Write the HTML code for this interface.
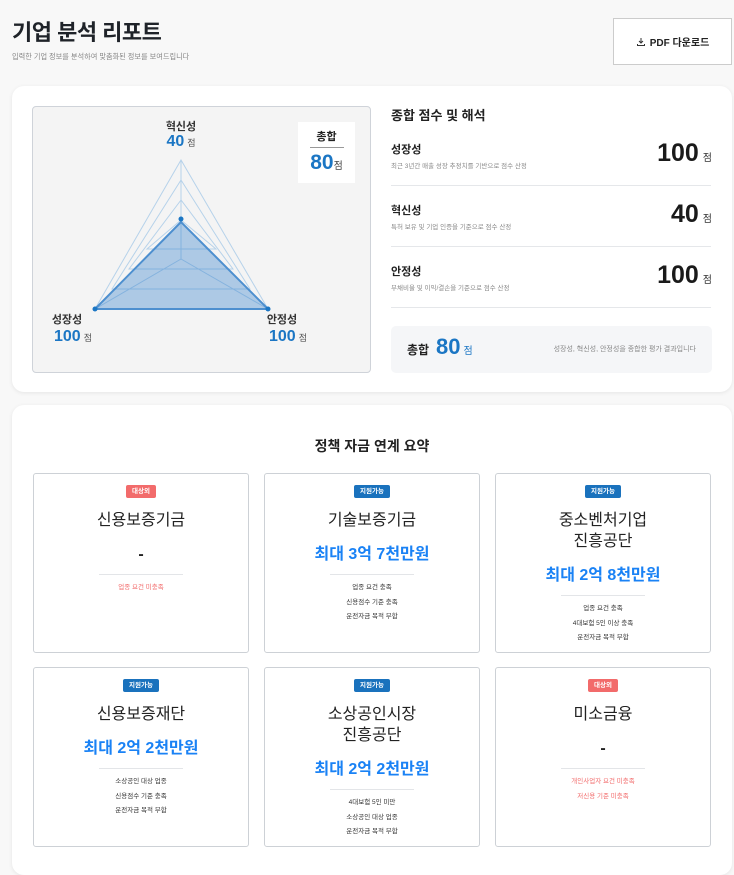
<!DOCTYPE html>
<html><head><meta charset="utf-8"><style>
*{margin:0;padding:0;box-sizing:border-box}
body{width:734px;height:856px;overflow:hidden;background:#f8f8f8;font-family:"Liberation Sans","Noto Sans CJK KR",sans-serif;color:#222;position:relative}
.abs{position:absolute}
h1{position:absolute;left:12px;top:15px;font-size:22px;font-weight:700;color:#1f2329;letter-spacing:-0.5px}
.sub{left:12px;top:52px;font-size:7.2px;color:#888}
.pdf{left:613px;top:18px;width:119px;height:47px;background:#fff;border:1px solid #ccc;font-size:10px;font-weight:700;display:flex;align-items:center;justify-content:center;gap:4px;color:#222}
.card{background:#fff;border-radius:12px;box-shadow:0 1px 4px rgba(0,0,0,.08)}
.radar{left:32px;top:106px;width:339px;height:267px;background:#f4f4f4;border:1px solid #cfd3d9;border-radius:4px}
.lbl{font-size:11px;font-weight:700;color:#333;text-align:center;width:80px}
.num{font-size:16px;font-weight:700;color:#1b76c4;text-align:center;width:80px;white-space:nowrap}
.num small{font-size:9px;color:#555;font-weight:400;margin-left:3px}
.tot{left:298px;top:122px;width:57px;height:61px;background:#fff;text-align:center}
.rt{left:391px;font-size:13px;font-weight:700;color:#222}
.rn{font-size:11px;font-weight:700;color:#222;left:391px}
.rd{font-size:6.5px;color:#888;left:391px}
.rs{right:22px;font-size:25px;font-weight:700;color:#1a1a1a;white-space:nowrap}
.rs small{font-size:10px;font-weight:400;color:#333;margin-left:4px}
.hr{left:391px;width:320px;height:1px;background:#e5e7ea}
.sum{left:391px;top:326px;width:321px;height:47px;background:#f5f6f8;border-radius:5px}
.pc{position:absolute;width:216px;height:180px;background:#fff;border:1px solid #cdd1d6;border-radius:3px;display:flex;flex-direction:column;align-items:center;padding-top:11px}
.bd{height:13px;padding:0 6px;border-radius:2px;font-size:6.5px;font-weight:700;color:#fff;line-height:13px}
.red{background:#f26b6b}.blue{background:#1a72bd}
.pt{margin-top:12px;font-size:16px;line-height:21px;text-align:center;color:#222}
.am{margin-top:14px;font-size:16px;font-weight:700;line-height:20px;color:#1a82f5}
.dash{margin-top:14px;font-size:16px;font-weight:700;line-height:20px;color:#222}
.dv{margin-top:9px;width:84px;height:1px;background:#e3e5e8}
.it{margin-top:6px;font-size:6.5px;line-height:14.5px;text-align:center;color:#333}
.it.r{color:#f26b6b}
</style></head><body>
<h1>기업 분석 리포트</h1>
<div class="abs sub">입력한 기업 정보를 분석하여 맞춤화된 정보를 보여드립니다</div>
<div class="abs pdf"><svg width="10" height="10" viewBox="0 0 10 10"><path d="M5 1v5M3 4l2 2 2-2M1.5 7v1.5h7V7" stroke="#333" stroke-width="1" fill="none"/></svg>PDF 다운로드</div>

<div class="abs card" style="left:12px;top:86px;width:720px;height:306px"></div>
<div class="abs radar"></div>
<svg class="abs" style="left:0;top:0" width="734" height="400">
<g fill="none" stroke="#9cc4e6" stroke-width="1" opacity=".7">
<polygon points="181,160 95,309 268,309"/>
<polygon points="181,180 112,289 250,289"/>
<polygon points="181,200 129,269 233,269"/>
<polygon points="181,220 147,249 216,249" />
<line x1="181" y1="259" x2="181" y2="160"/><line x1="181" y1="259" x2="95" y2="309"/><line x1="181" y1="259" x2="268" y2="309"/>
</g>
<polygon points="181,222 95,309 268,309" fill="rgba(40,120,200,0.35)" stroke="#4d8fcf" stroke-width="2"/>
<g fill="#1b76c4"><circle cx="181" cy="219" r="2.5"/><circle cx="95" cy="309" r="2.5"/><circle cx="268" cy="309" r="2.5"/></g>
</svg>
<div class="abs lbl" style="left:141px;top:118px">혁신성</div>
<div class="abs num" style="left:141px;top:133px">40<small>점</small></div>
<div class="abs lbl" style="left:27px;top:311px">성장성</div>
<div class="abs num" style="left:33px;top:328px">100<small>점</small></div>
<div class="abs lbl" style="left:242px;top:311px">안정성</div>
<div class="abs num" style="left:248px;top:328px">100<small>점</small></div>
<div class="abs tot"><div style="font-size:11px;font-weight:700;margin-top:6px">총합</div><div style="width:34px;height:1px;background:#999;margin:3px auto 0"></div><div style="font-size:21px;font-weight:700;color:#1b76c4;margin-top:3px">80<span style="font-size:10px;color:#444;font-weight:400">점</span></div></div>

<div class="abs rt" style="top:105px">종합 점수 및 해석</div>
<div class="abs rn" style="top:141px">성장성</div><div class="abs rd" style="top:160px">최근 3년간 매출 성장 추정치를 기반으로 점수 산정</div>
<div class="abs rs" style="top:139px">100<small>점</small></div>
<div class="abs hr" style="top:185px"></div>
<div class="abs rn" style="top:202px">혁신성</div><div class="abs rd" style="top:221px">특허 보유 및 기업 인증을 기준으로 점수 산정</div>
<div class="abs rs" style="top:200px">40<small>점</small></div>
<div class="abs hr" style="top:246px"></div>
<div class="abs rn" style="top:263px">안정성</div><div class="abs rd" style="top:282px">부채비율 및 이익/결손을 기준으로 점수 산정</div>
<div class="abs rs" style="top:261px">100<small>점</small></div>
<div class="abs hr" style="top:307px"></div>
<div class="abs sum"><span class="abs" style="left:16px;top:15px;font-size:12px;font-weight:700">총합</span><span class="abs" style="left:45px;top:8px;font-size:22px;font-weight:700;color:#1b76c4">80<span style="font-size:10px;font-weight:400;margin-left:3px">점</span></span><span class="abs" style="right:16px;top:18px;font-size:7px;color:#888">성장성, 혁신성, 안정성을 종합한 평가 결과입니다</span></div>

<div class="abs card" style="left:12px;top:405px;width:720px;height:470px"></div>
<div class="abs" style="left:12px;width:720px;top:436px;text-align:center;font-size:14px;font-weight:700">정책 자금 연계 요약</div>

<div class="pc" style="left:33px;top:473px"><div class="bd red">대상외</div><div class="pt">신용보증기금</div><div class="dash">-</div><div class="dv"></div><div class="it r">업종 요건 미충족</div></div>
<div class="pc" style="left:264px;top:473px"><div class="bd blue">지원가능</div><div class="pt">기술보증기금</div><div class="am">최대 3억 7천만원</div><div class="dv"></div><div class="it">업종 요건 충족<br>신용점수 기준 충족<br>운전자금 목적 부합</div></div>
<div class="pc" style="left:495px;top:473px"><div class="bd blue">지원가능</div><div class="pt">중소벤처기업<br>진흥공단</div><div class="am">최대 2억 8천만원</div><div class="dv"></div><div class="it">업종 요건 충족<br>4대보험 5인 이상 충족<br>운전자금 목적 부합</div></div>
<div class="pc" style="left:33px;top:667px"><div class="bd blue">지원가능</div><div class="pt">신용보증재단</div><div class="am">최대 2억 2천만원</div><div class="dv"></div><div class="it">소상공인 대상 업종<br>신용점수 기준 충족<br>운전자금 목적 부합</div></div>
<div class="pc" style="left:264px;top:667px"><div class="bd blue">지원가능</div><div class="pt">소상공인시장<br>진흥공단</div><div class="am">최대 2억 2천만원</div><div class="dv"></div><div class="it">4대보험 5인 미만<br>소상공인 대상 업종<br>운전자금 목적 부합</div></div>
<div class="pc" style="left:495px;top:667px"><div class="bd red">대상외</div><div class="pt">미소금융</div><div class="dash">-</div><div class="dv"></div><div class="it r">개인사업자 요건 미충족<br>저신용 기준 미충족</div></div>
</body></html>
